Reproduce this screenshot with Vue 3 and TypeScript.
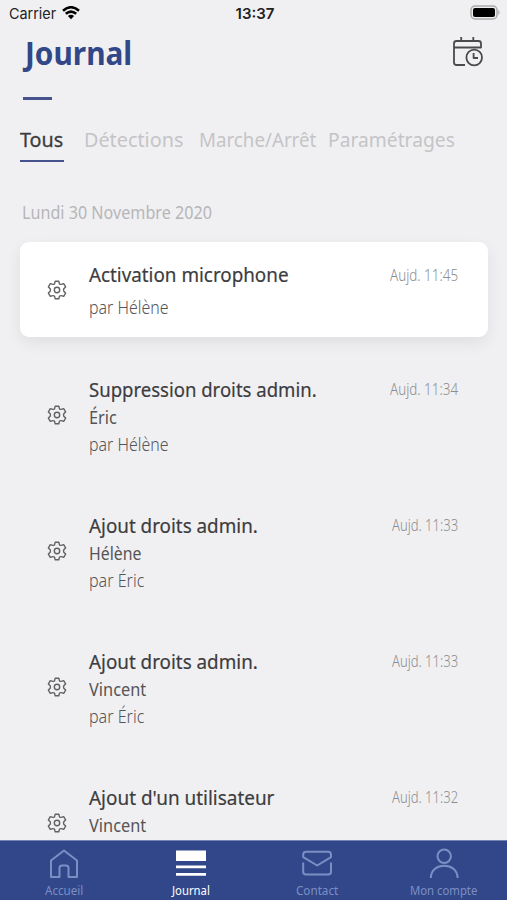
<script setup lang="ts">
import type { Directive } from 'vue'

interface Entry {
  title: string
  titleWidth: number
  target?: string
  targetWidth?: number
  author?: string
  authorWidth?: number
  time: string
  timeWidth: number
}

/* Narrows or widens a label so that it is drawn at the given width. */
const vFit: Directive<HTMLElement, number | undefined> = {
  mounted(el, binding) {
    if (!binding.value) return
    const natural = el.offsetWidth
    el.style.transform = `scaleX(${binding.value / natural})`
    el.style.marginRight = `${binding.value - natural}px`
  },
}

const tabs = [
  { label: 'Tous', width: 43.5, active: true },
  { label: 'Détections', width: 99, active: false },
  { label: 'Marche/Arrêt', width: 117, active: false },
  { label: 'Paramétrages', width: 127, active: false },
]

const entries: Entry[] = [
  { title: 'Activation microphone', titleWidth: 199.5, author: 'par Hélène', authorWidth: 79, time: 'Aujd. 11:45', timeWidth: 68 },
  { title: 'Suppression droits admin.', titleWidth: 228, target: 'Éric', targetWidth: 28, author: 'par Hélène', authorWidth: 79, time: 'Aujd. 11:34', timeWidth: 68 },
  { title: 'Ajout droits admin.', titleWidth: 168.5, target: 'Hélène', targetWidth: 52.5, author: 'par Éric', authorWidth: 55, time: 'Aujd. 11:33', timeWidth: 66 },
  { title: 'Ajout droits admin.', titleWidth: 168.5, target: 'Vincent', targetWidth: 57, author: 'par Éric', authorWidth: 55, time: 'Aujd. 11:33', timeWidth: 66 },
  { title: "Ajout d'un utilisateur", titleWidth: 185.5, target: 'Vincent', targetWidth: 57, time: 'Aujd. 11:32', timeWidth: 66 },
]
</script>

<template>
  <div class="screen">
    <div class="status">
      <div class="carrier">
        <span v-fit="47" class="fit">Carrier</span>
        <svg class="wifi" width="18" height="14" viewBox="0 0 18 14">
          <path d="M1 4.7Q9-2.2 17 4.7" />
          <path d="M3.8 7.8Q9 3.4 14.2 7.8" />
          <path class="dot" d="M5.9 10Q9 7.6 12.1 10L9 13.2Z" />
        </svg>
      </div>
      <div class="clock"><span v-fit="39" class="fit">13:37</span></div>
      <svg class="battery" width="31" height="15" viewBox="0 0 31 15">
        <rect x="1" y="1" width="26" height="13" rx="4" />
        <rect class="charge" x="3" y="3" width="22" height="9" rx="2" />
        <path d="M28.3 4.8Q31 7.5 28.3 10.2Z" />
      </svg>
    </div>

    <header class="header">
      <h1><span v-fit="107" class="fit">Journal</span></h1>
      <svg class="calendar" width="32" height="32" viewBox="0 0 32 32">
        <path d="M13 29H4.5Q2 29 2 26.5V7.5Q2 5 4.5 5H26.5Q29 5 29 7.5V11.5H2M9.2 1V5M21.3 1V5" />
        <circle cx="22.2" cy="21.5" r="7.8" />
        <path d="M21.6 17V22H26" />
      </svg>
    </header>
    <div class="rule"></div>

    <nav class="tabs">
      <div v-for="tab in tabs" :key="tab.label" class="tab" :class="{ active: tab.active }">
        <span v-fit="tab.width" class="fit">{{ tab.label }}</span>
      </div>
    </nav>

    <div class="date"><span v-fit="190" class="fit">Lundi 30 Novembre 2020</span></div>

    <main class="list">
      <article v-for="(entry, i) in entries" :key="i" class="entry" :class="{ card: i === 0 }">
        <svg class="gear" width="20" height="20" viewBox="0 0 20 20">
          <path d="M8.2 1.2H11.8L12.4 3.7Q13.2 4.5 14.2 4.4L16.7 3.7L18.6 6.9L16.8 8.8Q16.3 10 16.8 11.2L18.6 13.1L16.7 16.3L14.2 15.6Q13.2 15.5 12.4 16.3L11.8 18.8H8.2L7.6 16.3Q6.8 15.5 5.8 15.6L3.3 16.3L1.4 13.1L3.2 11.2Q3.7 10 3.2 8.8L1.4 6.9L3.3 3.7L5.8 4.4Q6.8 4.5 7.6 3.7Z" />
          <circle cx="10" cy="10" r="2.7" />
        </svg>
        <div class="body">
          <div class="title"><span v-fit="entry.titleWidth" class="fit">{{ entry.title }}</span></div>
          <div v-if="entry.target" class="target"><span v-fit="entry.targetWidth" class="fit">{{ entry.target }}</span></div>
          <div v-if="entry.author" class="author"><span v-fit="entry.authorWidth" class="fit">{{ entry.author }}</span></div>
        </div>
        <time class="time"><span v-fit="entry.timeWidth" class="fit">{{ entry.time }}</span></time>
      </article>
    </main>

    <footer class="bar">
      <div class="item">
        <svg width="32" height="32" viewBox="0 0 32 32">
          <path d="M3 12.5L16 2.5L29 12.5V29H20.5V20Q20.5 17.5 18 17.5H14Q11.5 17.5 11.5 20V29H3Z" />
        </svg>
        <span v-fit="38" class="fit">Accueil</span>
      </div>
      <div class="item current">
        <svg width="32" height="32" viewBox="0 0 32 32">
          <path class="solid" d="M1 2.5H31V13H1ZM1 17.5H31V20.3H1ZM1 25H31V27.8H1Z" />
        </svg>
        <span v-fit="38" class="fit">Journal</span>
      </div>
      <div class="item">
        <svg width="32" height="32" viewBox="0 0 32 32">
          <path d="M2.2 14.5V23.8Q2.2 26.6 5 26.6H27.2Q30 26.6 30 23.8V14.5M30 9.2V6.5Q30 3.7 27.2 3.7H5Q2.2 3.7 2.2 6.5V9.2L16.2 17.5Z" />
        </svg>
        <span v-fit="42" class="fit">Contact</span>
      </div>
      <div class="item">
        <svg width="32" height="32" viewBox="0 0 32 32">
          <circle cx="16.2" cy="8.2" r="6.7" />
          <path d="M2.8 30C2.8 13.5 29.6 13.5 29.6 30" />
        </svg>
        <span v-fit="67" class="fit">Mon compte</span>
      </div>
    </footer>
  </div>
</template>

<style>
body {
  margin: 0;
  background: #f0f0f2;
}
</style>

<style scoped>
.screen {
  width: 507px;
  height: 900px;
  display: flex;
  flex-direction: column;
  overflow: hidden;
  background: #f0f0f2;
  font-family: "Noto Sans", sans-serif;
  color: #3c3c3e;
}
.fit {
  display: inline-block;
  transform-origin: left center;
  white-space: nowrap;
}
svg {
  display: block;
  flex: none;
  fill: none;
  stroke-linejoin: round;
}
.status {
  height: 28px;
  flex: none;
  display: grid;
  grid-template-columns: 1fr auto 1fr;
  padding: 0 6px 0 9px;
  font-family: Inter, sans-serif;
  font-size: 15px;
  line-height: 27px;
  color: #222;
}
.carrier {
  display: flex;
  gap: 6px;
}
.wifi {
  margin-top: 6px;
  stroke: #000;
  stroke-width: 2.6;
}
.wifi .dot {
  fill: #000;
  stroke: none;
}
.clock {
  font-weight: 600;
}
.battery {
  justify-self: end;
  margin-top: 5px;
  fill: #aaa;
}
.battery rect {
  fill: #eee;
  stroke: #aaa;
  stroke-width: 1.5;
}
.battery .charge {
  fill: #000;
  stroke: none;
}
.header {
  height: 69px;
  flex: none;
  display: flex;
  justify-content: space-between;
  padding: 0 23px 0 25px;
  box-sizing: border-box;
}
h1 {
  margin: 1px 0 0;
  font-size: 32px;
  font-weight: 700;
  line-height: 48px;
  color: #324788;
}
.calendar {
  margin-top: 8px;
  stroke: #4a4a4c;
  stroke-width: 1.8;
}
.rule {
  width: 29px;
  height: 2.5px;
  flex: none;
  margin-left: 23px;
  background: #45528e;
}
.tabs {
  display: grid;
  grid-template-columns: 64px 114.5px 129.5px 130px;
  padding-left: 20px;
  margin-top: 26.5px;
  flex: none;
}
.tab {
  justify-self: start;
  box-sizing: border-box;
  height: 36px;
  font-size: 20px;
  line-height: 28px;
  color: #c4c4c7;
}
.tab.active {
  width: 44px;
  border-bottom: 2.5px solid #45528e;
  color: #3c3c3e;
  -webkit-text-stroke: 0.3px #3c3c3e;
}
.date {
  margin: 37px 0 0 21.5px;
  flex: none;
  font-size: 18px;
  line-height: 26px;
  font-weight: 400;
  color: #b6b6b9;
}
.list {
  flex: 1;
  min-height: 0;
  overflow: hidden;
  padding: 17px 19px 0 20px;
}
.entry {
  display: flex;
  align-items: center;
  height: 136px;
  box-sizing: border-box;
  padding: 0 30px 0 27px;
}
.entry.card {
  height: 95px;
  margin-bottom: 10px;
  border-radius: 9px;
  background: #fff;
  box-shadow: 0 6px 16px rgba(0, 0, 0, 0.07);
}
.gear {
  stroke: #626264;
  stroke-width: 1.4;
}
.body {
  margin: 2px 0 0 22px;
  min-height: 83px;
  flex: 1;
}
.card .body {
  margin-top: 1px;
  min-height: 0;
}
.title {
  padding-top: 1px;
  font-size: 20px;
  line-height: 28px;
  -webkit-text-stroke: 0.2px #3c3c3e;
}
.target,
.author {
  font-size: 17.5px;
  line-height: 27px;
  color: #555557;
}
.author {
  font-weight: 300;
}
.card .author {
  margin-top: 5px;
}
.time {
  align-self: flex-start;
  margin-top: 29px;
  font-size: 16px;
  line-height: 26px;
  font-weight: 300;
  color: #8c8c8f;
}
.card .time {
  margin-top: 20px;
}
.bar {
  height: 60px;
  flex: none;
  display: grid;
  grid-template-columns: repeat(4, 1fr);
  padding: 7px 0 0 1px;
  box-sizing: border-box;
  border-top: 1px solid #7485b3;
  background: #314789;
  font-size: 12.5px;
  line-height: 16px;
  color: #7c8fc5;
}
.item {
  display: flex;
  flex-direction: column;
  align-items: center;
}
.item svg {
  stroke: currentColor;
  stroke-width: 2;
}
.item .fit {
  margin-top: 3px;
}
.item.current {
  color: #fff;
}
.item .solid {
  fill: #fff;
  stroke: none;
}
</style>
